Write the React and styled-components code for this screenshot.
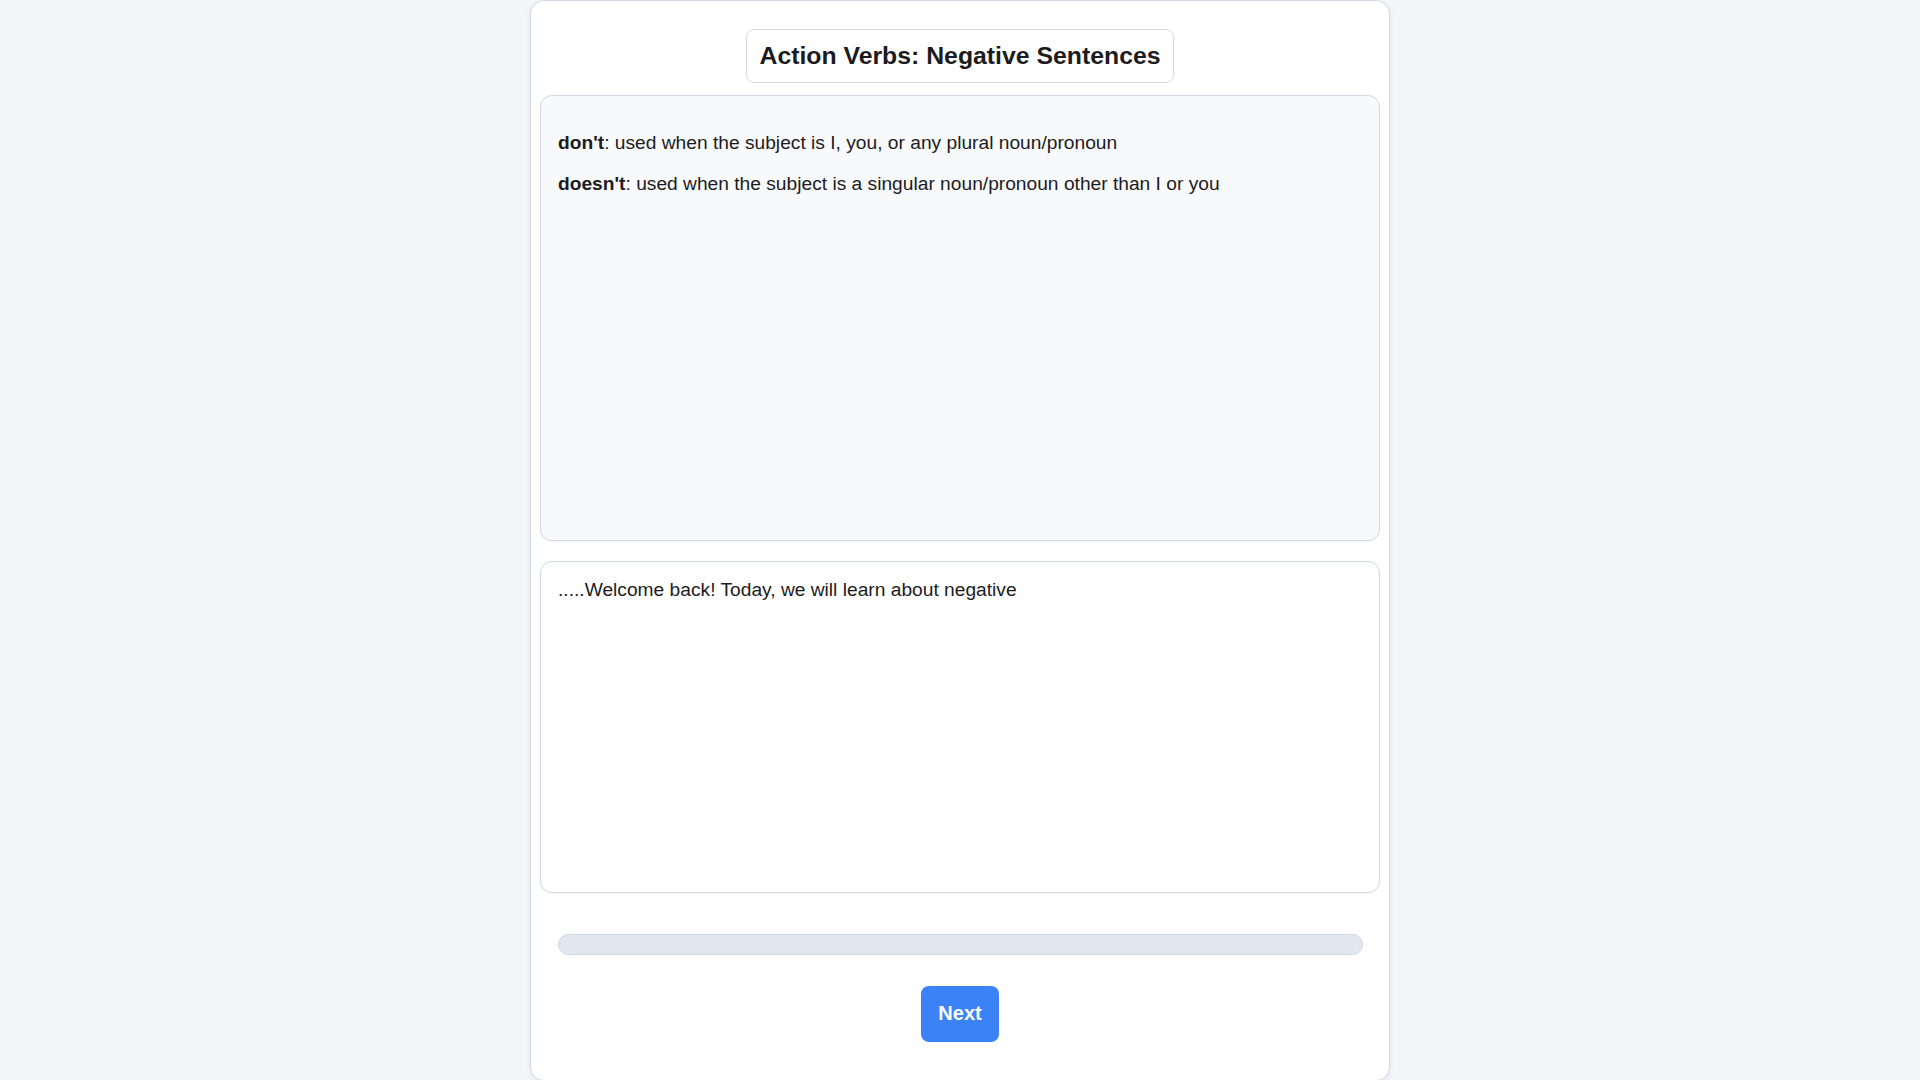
import React from "react";
import styled, { createGlobalStyle } from "styled-components";

const GlobalStyle = createGlobalStyle`
  html, body {
    margin: 0;
    padding: 0;
    background: #f4f5f9;
    font-family: "Liberation Sans", Arial, sans-serif;
    color: #1c1c1e;
  }
  * { box-sizing: border-box; }
`;

const Card = styled.main`
  width: 860px;
  min-height: 1080px;
  margin: 0 auto;
  background: #ffffff;
  border: 1px solid #d3d8e4;
  border-radius: 14px;
  box-shadow: 0 1px 4px rgba(30, 40, 70, 0.08);
  padding: 28px 9px 38px;
  display: flex;
  flex-direction: column;
  align-items: stretch;
`;

const TitleRow = styled.header`
  display: flex;
  justify-content: center;
  margin-bottom: 12px;
`;

const Title = styled.h1`
  margin: 0;
  font-size: 24.8px;
  font-weight: 700;
  line-height: 28px;
  padding: 12px 12.5px;
  border: 1px solid #d3d8e4;
  border-radius: 8px;
  background: #ffffff;
  color: #1c1c1e;
`;

const Panel = styled.section`
  border: 1px solid #d3d8e4;
  border-radius: 12px;
  background: ${(p) => (p.$muted ? "#f8f9fb" : "#ffffff")};
  box-shadow: 0 1px 2px rgba(30, 40, 70, 0.05);
  height: ${(p) => p.$height}px;
  padding: ${(p) => p.$pad};
  font-size: 19.2px;
  line-height: normal;
`;

const Rule = styled.p`
  margin: 19.2px 0;
`;

const Term = styled.strong`
  font-weight: 700;
`;

const Transcript = styled.p`
  margin: 0;
`;

const Gap = styled.div`
  height: ${(p) => p.$h}px;
  flex: none;
`;

const Progress = styled.div`
  margin: 0 17.5px;
  height: 21px;
  border-radius: 999px;
  background: #e2e8f0;
  border: 1px solid #cdd5e2;
  overflow: hidden;
`;

const ProgressFill = styled.div`
  height: 100%;
  background: #3b82f6;
`;

const ButtonRow = styled.div`
  display: flex;
  justify-content: center;
`;

const NextButton = styled.button`
  font-family: "Liberation Sans", Arial, sans-serif;
  font-size: 20px;
  font-weight: 700;
  line-height: 24px;
  color: #ffffff;
  background: #3b82f6;
  border: none;
  border-radius: 8px;
  padding: 15px 17px 17px;
  cursor: pointer;
`;

export default function App() {
  const progress = 0;
  return (
    <>
      <GlobalStyle />
      <Card>
        <TitleRow>
          <Title>Action Verbs: Negative Sentences</Title>
        </TitleRow>
        <Panel $muted $height={446} $pad="17px 17px 15px">
          <Rule>
            <Term>don't</Term>: used when the subject is I, you, or any plural noun/pronoun
          </Rule>
          <Rule>
            <Term>doesn't</Term>: used when the subject is a singular noun/pronoun other than I or you
          </Rule>
        </Panel>
        <Gap $h={20} />
        <Panel $height={332} $pad="17px 17px">
          <Transcript>.....Welcome back! Today, we will learn about negative</Transcript>
        </Panel>
        <Gap $h={41} />
        <Progress>
          <ProgressFill style={{ width: `${progress}%` }} />
        </Progress>
        <Gap $h={31} />
        <ButtonRow>
          <NextButton>Next</NextButton>
        </ButtonRow>
      </Card>
    </>
  );
}
